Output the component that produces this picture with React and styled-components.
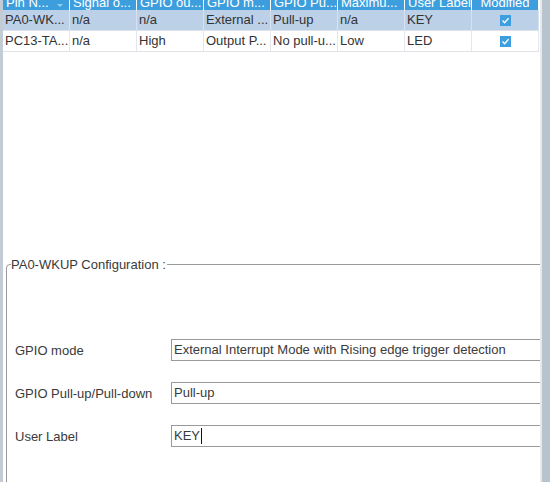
import React from "react";
import styled, { createGlobalStyle } from "styled-components";

const Global = createGlobalStyle`
  html, body { margin: 0; padding: 0; background: #fff; }
  body { font-family: "Liberation Sans", Arial, sans-serif; font-size: 13px; color: #3a3a3a; }
`;

const Page = styled.div`
  display: flex;
  width: 550px;
  height: 482px;
  overflow: hidden;
  background: #fff;
`;

const LeftStrip = styled.div`
  width: 3px;
  flex: none;
  background: #c3ccd4;
`;

const RightStrip = styled.div`
  width: 8px;
  flex: none;
  background: #b9c3cc;
  border-left: 2px solid #e6eaee;
`;

const Main = styled.div`
  flex: 1;
  min-width: 0;
  display: flex;
  flex-direction: column;
  overflow: hidden;
`;

const TablePanel = styled.div`
  height: 257px;
  flex: none;
`;

const Grid = styled.div`
  display: grid;
  grid-template-columns: repeat(8, 67px);
`;

const HeadCell = styled.div`
  height: 10px;
  overflow: hidden;
  background: #3d9edd;
  color: #fff;
  display: flex;
  align-items: flex-end;
  justify-content: ${(p) => (p.$center ? "center" : "flex-start")};
  line-height: 15px;
  padding: 0 3px 0 3px;
  border-right: 1px solid #fff;
  white-space: nowrap;
  position: relative;
`;

const SortArrow = styled.span`
  position: absolute;
  right: 6px;
  bottom: 3px;
  width: 0;
  height: 0;
  border-left: 3px solid transparent;
  border-right: 3px solid transparent;
  border-top: 3px solid #93cdf0;
`;

const Cell = styled.div`
  height: 20px;
  line-height: 20px;
  padding: 0 1px 0 2px;
  background: ${(p) => (p.$selected ? "#bcd1e8" : "#fff")};
  border-right: 1px solid ${(p) => (p.$selected ? "#d6e2ef" : "#e3e6ea")};
  border-bottom: 1px solid #dfe3e8;
  white-space: nowrap;
  overflow: hidden;
  color: #333;
  display: flex;
  align-items: center;
  justify-content: ${(p) => (p.$center ? "center" : "flex-start")};
`;

const Check = styled.span`
  width: 11px;
  height: 11px;
  background: #3d9fe0;
  display: inline-flex;
  align-items: center;
  justify-content: center;
`;

const Fieldset = styled.fieldset`
  margin: 0 -20px -20px 3px;
  padding: 0 0 0 8px;
  border: 1px solid #999;
  border-radius: 4px;
  flex: 1;
  min-height: 0;
`;

const Legend = styled.legend`
  padding: 0 1px 0 0;
  margin-left: -4px;
  font-size: 13px;
  line-height: 15px;
  color: #3a3a3a;
`;

const Form = styled.div`
  display: grid;
  grid-template-columns: 156px 1fr;
  row-gap: 21px;
  margin-top: 67px;
  align-items: center;
`;

const Label = styled.div`
  color: #3a3a3a;
  font-size: 13px;
`;

const Field = styled.div`
  height: 20px;
  border: 1px solid #9a9a9a;
  line-height: 20px;
  padding-left: 2px;
  color: #3a3a3a;
  white-space: nowrap;
  overflow: hidden;
  display: flex;
  align-items: center;
`;

const Caret = styled.span`
  display: inline-block;
  width: 1px;
  height: 16px;
  background: #111;
  margin-left: 1px;
`;

const headers = [
  "Pin N...",
  "Signal o...",
  "GPIO ou...",
  "GPIO m...",
  "GPIO Pu...",
  "Maximu...",
  "User Label",
  "Modified",
];

const rows = [
  ["PA0-WK...", "n/a", "n/a", "External ...", "Pull-up", "n/a", "KEY"],
  ["PC13-TA...", "n/a", "High", "Output P...", "No pull-u...", "Low", "LED"],
];

const CheckMark = () => (
  <Check>
    <svg width="9" height="9" viewBox="0 0 9 9">
      <path d="M1.5 4.6 L3.6 6.7 L7.6 2.2" fill="none" stroke="#fff" strokeWidth="1.4" />
    </svg>
  </Check>
);

export default function App() {
  return (
    <>
      <Global />
      <Page>
        <LeftStrip />
        <Main>
          <TablePanel>
            <Grid>
              {headers.map((h, i) => (
                <HeadCell key={h} $center={i === 7}>
                  {h}
                  {i === 0 && <SortArrow />}
                </HeadCell>
              ))}
              {rows.map((r, ri) => (
                <React.Fragment key={ri}>
                  {r.map((c, ci) => (
                    <Cell key={ci} $selected={ri === 0}>
                      {c}
                    </Cell>
                  ))}
                  <Cell $selected={ri === 0} $center>
                    <CheckMark />
                  </Cell>
                </React.Fragment>
              ))}
            </Grid>
          </TablePanel>
          <Fieldset>
            <Legend>PA0-WKUP Configuration :</Legend>
            <Form>
              <Label>GPIO mode</Label>
              <Field>External Interrupt Mode with Rising edge trigger detection</Field>
              <Label>GPIO Pull-up/Pull-down</Label>
              <Field>Pull-up</Field>
              <Label>User Label</Label>
              <Field>
                KEY
                <Caret />
              </Field>
            </Form>
          </Fieldset>
        </Main>
        <RightStrip />
      </Page>
    </>
  );
}
